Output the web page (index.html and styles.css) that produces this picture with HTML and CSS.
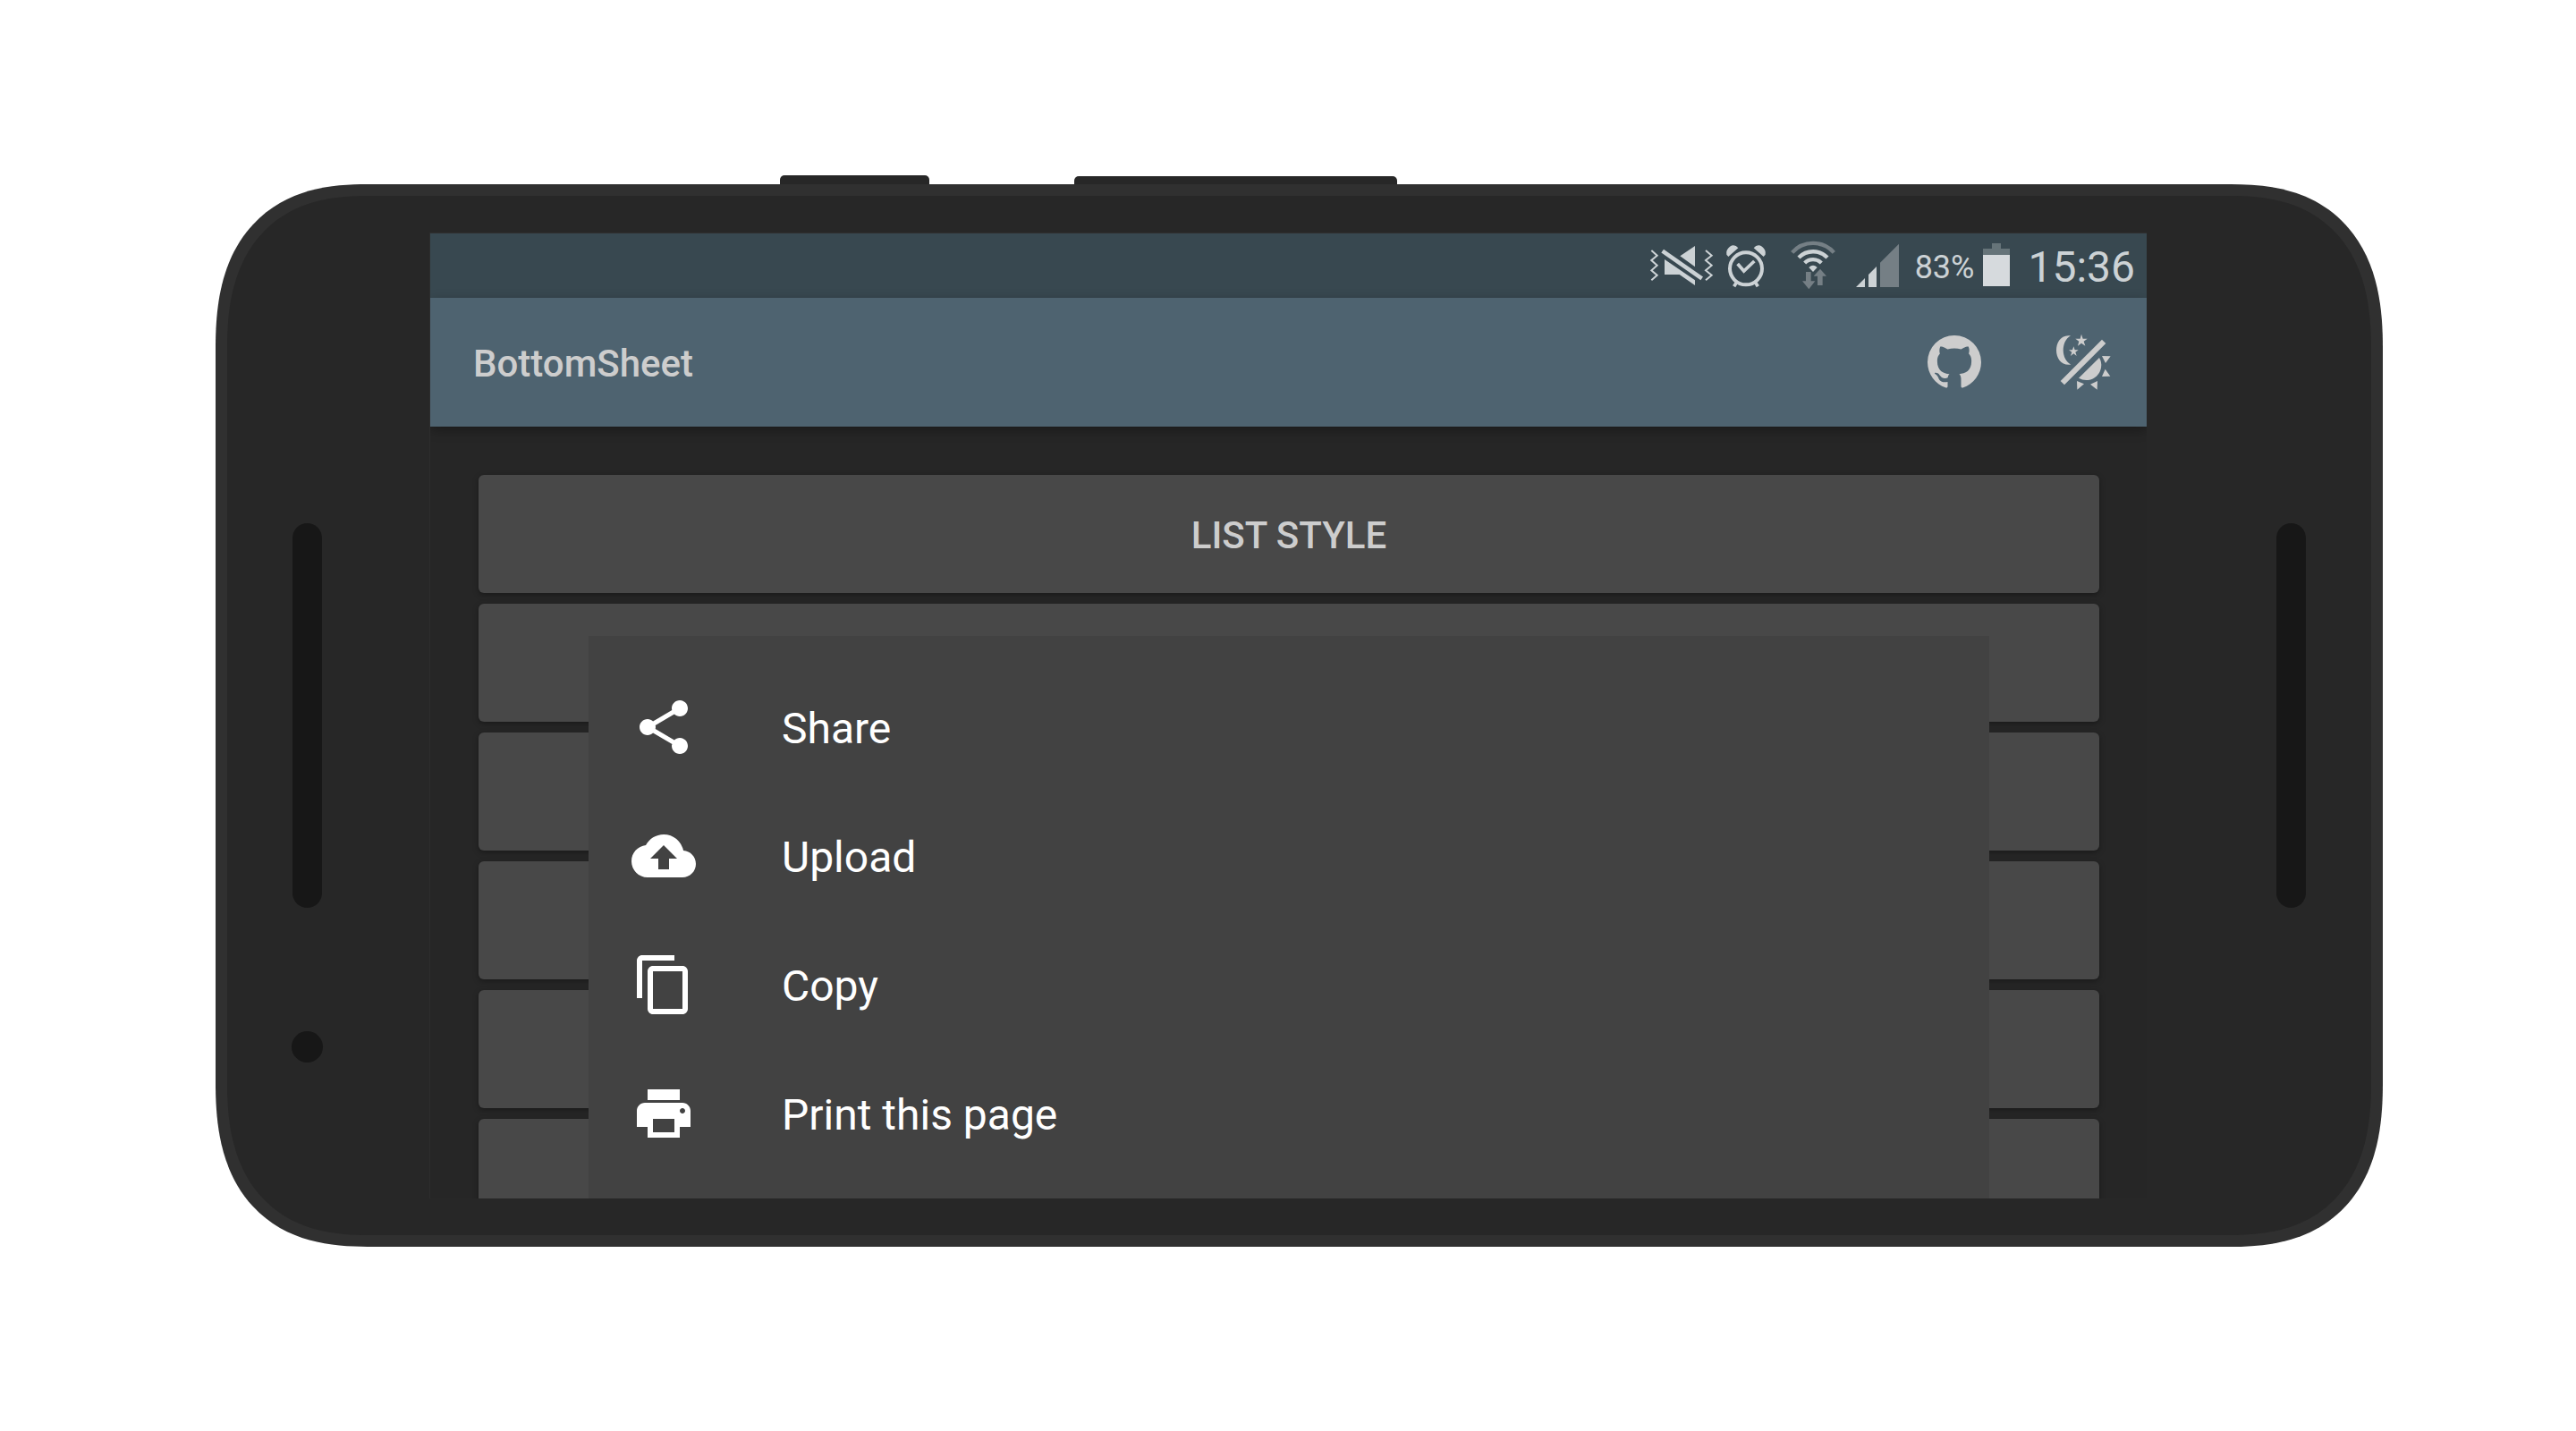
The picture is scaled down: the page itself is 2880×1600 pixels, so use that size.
FILE: index.html
```html
<!DOCTYPE html>
<html lang="en">
<head>
<meta charset="utf-8">
<title>BottomSheet</title>
<link rel="stylesheet" href="styles.css">
</head>
<body>
<div class="phone">
  <span class="side-key side-key-power"></span>
  <span class="side-key side-key-volume"></span>

  <div class="bezel bezel-left">
    <span class="speaker"></span>
    <span class="sensor"></span>
  </div>

  <div class="screen">
    <div class="status-bar">
      <svg class="icon-vibrate" viewBox="45 27 213 168" aria-hidden="true">
        <path class="line" stroke-width="6" d="M49 60L68 77L49 93L68 110L49 127L68 143L49 160M231 60L251 77L231 93L251 110L231 127L251 143L231 160"/>
        <path class="line" stroke-width="14" d="M86 62L218 154"/>
        <path d="M145 79L195 45V115ZM93 90L195 160V177L143 141H93Z"/>
      </svg>
      <svg class="icon-alarm" viewBox="297 27 138 168" aria-hidden="true">
        <circle class="line" stroke-width="12" cx="366" cy="121" r="54"/>
        <path class="line" stroke-width="11" d="M338 105L359 129L394 96M336 165L326 181M396 165L406 181"/>
        <path d="M307 81L301 74Q298 58 312 47Q328 37 340 52ZM425 81L431 74Q434 58 420 47Q404 37 392 52Z"/>
      </svg>
      <svg class="icon-wifi" viewBox="513 27 156 168" aria-hidden="true">
        <path class="line-dim" stroke-width="13" d="M521 67A94 94 0 0 1 661 67"/>
        <path class="line" stroke-width="13" d="M543 84A67 67 0 0 1 639 84M563 102A40 40 0 0 1 619 102"/>
        <path d="M577 117Q591 103 605 117L591 132Z"/>
        <path class="dim" d="M567 132H584V163H598L577 190L555 163H567ZM606 177V146H593L615 122L636 146H623V177Z"/>
      </svg>
      <svg class="icon-signal" viewBox="732 27 150 168" aria-hidden="true">
        <path d="M735 183L765 153V183ZM777 183V141L804 114V183Z"/>
        <path class="dim" d="M816 183V101L879 38V183Z"/>
      </svg>
      <span class="battery-level label">83%</span>
      <svg class="icon-battery" viewBox="0 0 30 56" aria-hidden="true">
        <path class="battery-empty" d="M10 3H20V9H30V16H0V9H10Z"/>
        <path class="battery-full" d="M0 16H30V51H0Z"/>
      </svg>
      <time class="clock label">15:36</time>
    </div>

    <header class="toolbar">
      <h1 class="title label">BottomSheet</h1>
      <button class="action" type="button" aria-label="GitHub">
        <svg viewBox="0 0 24 24" aria-hidden="true"><path d="M12,2A10,10 0 0,0 2,12C2,16.42 4.87,20.17 8.84,21.5C9.34,21.58 9.5,21.27 9.5,21C9.5,20.77 9.5,20.14 9.5,19.31C6.73,19.91 6.14,17.97 6.14,17.97C5.68,16.81 5.03,16.5 5.03,16.5C4.12,15.88 5.1,15.9 5.1,15.9C6.1,15.97 6.63,16.93 6.63,16.93C7.5,18.45 8.97,18 9.54,17.76C9.63,17.11 9.89,16.67 10.17,16.42C7.95,16.17 5.62,15.31 5.62,11.5C5.62,10.39 6,9.5 6.65,8.79C6.55,8.54 6.2,7.5 6.75,6.15C6.75,6.15 7.59,5.88 9.5,7.17C10.29,6.95 11.15,6.84 12,6.84C12.85,6.84 13.71,6.95 14.5,7.17C16.41,5.88 17.25,6.15 17.25,6.15C17.8,7.5 17.45,8.54 17.35,8.79C18,9.5 18.38,10.39 18.38,11.5C18.38,15.32 16.04,16.16 13.81,16.41C14.17,16.72 14.5,17.33 14.5,18.26C14.5,19.6 14.5,20.68 14.5,21C14.5,21.27 14.66,21.59 15.17,21.5C19.14,20.16 22,16.42 22,12A10,10 0 0,0 12,2Z"/></svg>
      </button>
      <button class="action" type="button" aria-label="Toggle night mode">
        <svg viewBox="579 87 216 216" aria-hidden="true">
          <path d="M645 106C612 101 597 129 597 155C597 182 615 208 646 203C613 186 611 126 645 106Z"/>
          <path d="M681 101L686 116H701L689 125L694 140L681 131L669 140L673 125L661 116H677ZM655 142L659 154H671L661 161L665 174L655 166L645 174L649 161L639 154H651Z"/>
          <path d="M750 119L763 132L624 271L611 258Z"/>
          <path d="M741 180A50 50 0 0 1 672 248Z"/>
          <path d="M750 174L779 175L762 198ZM761 218L778 242L750 243ZM666 258L690 268L667 287ZM711 269L735 258L734 287Z"/>
        </svg>
      </button>
    </header>

    <main class="styles">
      <button class="style-button" type="button"><span class="label">LIST STYLE</span></button>
      <button class="style-button" type="button" aria-label="List style with header"></button>
      <button class="style-button" type="button" aria-label="Grid style"></button>
      <button class="style-button" type="button" aria-label="Grid style with header"></button>
      <button class="style-button" type="button" aria-label="Custom style"></button>
      <button class="style-button" type="button" aria-label="Share sheet"></button>
    </main>

    <div class="sheet" role="menu">
      <button class="sheet-item" type="button" role="menuitem">
        <svg viewBox="0 0 24 24" aria-hidden="true"><path d="M18 16c-.79 0-1.5.31-2.03.81L8.91 12.7c.05-.23.09-.46.09-.7s-.04-.47-.09-.7l7.05-4.11c.53.5 1.25.81 2.04.81 1.66 0 3-1.34 3-3s-1.34-3-3-3-3 1.34-3 3c0 .24.04.47.09.7L8.04 9.81C7.5 9.31 6.79 9 6 9c-1.66 0-3 1.34-3 3s1.34 3 3 3c.79 0 1.5-.31 2.04-.81l7.12 4.16c-.1.21-.16.43-.16.65 0 1.66 1.34 3 3 3s3-1.34 3-3-1.34-3-3-3z"/></svg>
        <span class="label">Share</span>
      </button>
      <button class="sheet-item" type="button" role="menuitem">
        <svg viewBox="0 0 24 24" aria-hidden="true"><path d="M19.35 10.04C18.67 6.59 15.64 4 12 4 9.11 4 6.6 5.64 5.35 8.04 2.34 8.36 0 10.91 0 14c0 3.31 2.69 6 6 6h13c2.76 0 5-2.24 5-5 0-2.64-2.05-4.78-4.65-4.96zM14 13v4h-4v-4H7l5-5 5 5h-3z"/></svg>
        <span class="label">Upload</span>
      </button>
      <button class="sheet-item" type="button" role="menuitem">
        <svg viewBox="0 0 24 24" aria-hidden="true"><path d="M16 1H4c-1.1 0-2 .9-2 2v14h2V3h12V1zm3 4H8c-1.1 0-2 .9-2 2v14c0 1.1.9 2 2 2h11c1.100 0 2-.9 2-2V7c0-1.100-.9-2-2-2zm0 16H8V7h11v14z"/></svg>
        <span class="label">Copy</span>
      </button>
      <button class="sheet-item" type="button" role="menuitem">
        <svg viewBox="0 0 24 24" aria-hidden="true"><path d="M19 8H5c-1.660 0-3 1.340-3 3v6h4v4h12v-4h4v-6c0-1.660-1.340-3-3-3zm-3 11H8v-5h8v5zm3-7c-.55 0-1-.45-1-1s.45-1 1-1 1 .45 1 1-.45 1-1 1zm-1-9H6v4h12V3z"/></svg>
        <span class="label">Print this page</span>
      </button>
    </div>
  </div>

  <div class="bezel bezel-right">
    <span class="speaker"></span>
  </div>
</div>
</body>
</html>
```
FILE: styles.css
```css
* {
  box-sizing: border-box;
}

body {
  margin: 0;
  padding: 206px 216px 206px 241px;
  background: #ffffff;
  font-family: Roboto, "Liberation Sans", sans-serif;
}

button {
  margin: 0;
  border: 0;
  font-family: inherit;
  cursor: pointer;
}

svg {
  display: block;
  flex: none;
  fill: currentColor;
}

/* Text sits slightly low in its row, as Android's font padding places it */
.label {
  display: block;
  padding-top: 4px;
}

/* Phone body */
.phone {
  position: relative;
  display: grid;
  grid-template-columns: 226px 1fr 251px;
  padding: 41px 0;
  border: 13px solid #303030;
  border-radius: 142px / 152px;
  background: #272727;
}

@supports (corner-shape: superellipse(1.3)) {
  .phone {
    border-radius: 170px / 184px;
    corner-shape: superellipse(1.3);
  }
}

.side-key {
  position: absolute;
  bottom: calc(100% + 13px);
  border-radius: 5px 5px 0 0;
  background: #272727;
}

.side-key-power {
  left: 618px;
  width: 167px;
  height: 10px;
}

.side-key-volume {
  left: 947px;
  width: 361px;
  height: 9px;
}

.bezel {
  display: grid;
  grid-template-rows: 1fr auto 1fr;
  justify-items: center;
}

.bezel-left {
  padding-right: 47px;
}

.bezel-right {
  padding-left: 72px;
}

.speaker {
  grid-row: 2;
  width: 33px;
  height: 430px;
  border-radius: 17px;
  background: #171717;
}

.sensor {
  grid-row: 3;
  width: 35px;
  height: 35px;
  margin-top: 138px;
  border-radius: 50%;
  background: #171717;
}

/* Screen */
.screen {
  position: relative;
  aspect-ratio: 16 / 9;
  min-height: 0;
  overflow: hidden;
  border-top: 1px solid #2f2f2f;
  border-left: 1px solid #2d2d2d;
  background: #262626;
}

.status-bar {
  display: flex;
  align-items: center;
  justify-content: flex-end;
  height: 72px;
  padding-right: 13px;
  background: #384850;
  color: #ccd2d5;
}

.status-bar svg {
  height: 56px;
}

.status-bar .line {
  fill: none;
  stroke: currentColor;
}

.status-bar .line-dim {
  fill: none;
  stroke: #757f85;
}

.status-bar .dim {
  fill: #757f85;
}

.icon-vibrate {
  width: 71px;
  margin-right: 13px;
}

.icon-alarm {
  width: 46px;
  margin-right: 26px;
}

.icon-wifi {
  width: 52px;
  margin-right: 21px;
}

.icon-signal {
  width: 50px;
  margin-right: 17px;
}

.battery-level {
  margin-right: 10px;
  font-size: 36px;
  line-height: 48px;
}

.icon-battery {
  width: 30px;
  margin-right: 20px;
}

.battery-empty {
  fill: #667479;
}

.battery-full {
  fill: #d6dadd;
}

.clock {
  font-size: 48px;
  line-height: 56px;
}

.toolbar {
  position: relative;
  display: flex;
  align-items: center;
  gap: 72px;
  height: 144px;
  padding: 0 35px 0 48px;
  background: #4e6370;
  box-shadow: 0 4px 12px rgba(0, 0, 0, 0.3);
  color: #cdcdcd;
}

.title {
  flex: 1;
  margin: 0;
  font-size: 42px;
  font-weight: 500;
  line-height: 48px;
}

.action {
  padding: 0;
  background: none;
  color: inherit;
}

.action svg {
  width: 72px;
  height: 72px;
}

.styles {
  display: flex;
  flex-direction: column;
  gap: 12px;
  padding: 54px 53px 0 54px;
}

.style-button {
  height: 132px;
  border-radius: 6px;
  background: #484848;
  box-shadow: 0 2px 6px rgba(0, 0, 0, 0.35);
  color: #cdcdcd;
  font-size: 42px;
  font-weight: 500;
  line-height: 48px;
}

/* Bottom sheet */
.sheet {
  position: absolute;
  right: 176px;
  bottom: 0;
  left: 177px;
  display: flex;
  flex-direction: column;
  padding: 30px 0 23px;
  background: #424242;
}

.sheet-item {
  display: flex;
  align-items: center;
  gap: 96px;
  height: 144px;
  padding: 0 48px;
  background: none;
  color: #ffffff;
  font-size: 48px;
  line-height: 56px;
  text-align: left;
}

.sheet-item svg {
  width: 72px;
  height: 72px;
}
```
